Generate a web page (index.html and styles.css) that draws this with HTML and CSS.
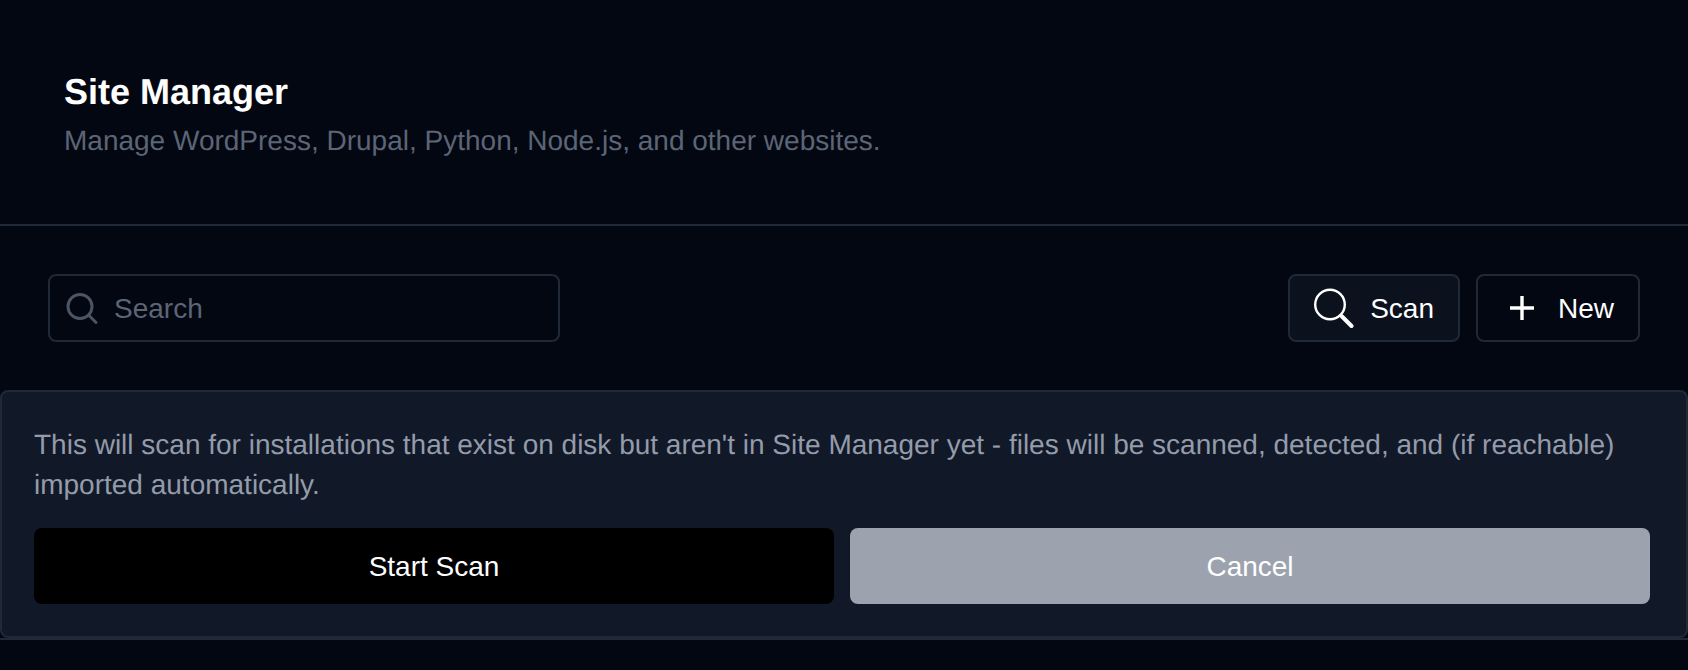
FILE: index.html
```html
<!DOCTYPE html>
<html lang="en">
<head>
    <meta charset="UTF-8">
    <title>Site Manager</title>
    <link rel="stylesheet" href="styles.css">
</head>
<body>
    <header class="page-header">
        <h1>Site Manager</h1>
        <p>Manage WordPress, Drupal, Python, Node.js, and other websites.</p>
    </header>

    <div class="toolbar">
        <label class="search">
            <svg class="search-icon" viewBox="0 0 36 36" fill="none" stroke="currentColor" stroke-width="3" stroke-linecap="round">
                <circle cx="16" cy="16.5" r="12"/>
                <path d="M25 25.5L32 32.5"/>
            </svg>
            <input type="text" placeholder="Search">
        </label>
        <div class="actions">
            <button class="tool-btn tool-btn-scan">
                <svg class="tool-icon" viewBox="0 0 40 40" fill="none" stroke="currentColor" stroke-linecap="round">
                    <circle cx="16" cy="16.5" r="14.8" stroke-width="2.4"/>
                    <path d="M27.5 28L37.5 38" stroke-width="4"/>
                </svg>
                <span>Scan</span>
            </button>
            <button class="tool-btn">
                <svg class="tool-icon" viewBox="0 0 40 40" fill="none" stroke="currentColor" stroke-width="3.4">
                    <path d="M20 8V32M8 20H32"/>
                </svg>
                <span>New</span>
            </button>
        </div>
    </div>

    <section class="scan-wrap">
        <div class="scan-panel">
            <p>This will scan for installations that exist on disk but aren't in Site Manager yet - files will be scanned, detected, and (if reachable) imported automatically.</p>
            <div class="scan-buttons">
                <button class="scan-btn scan-btn-start">Start Scan</button>
                <button class="scan-btn scan-btn-cancel">Cancel</button>
            </div>
        </div>
    </section>
</body>
</html>
```

FILE: styles.css
```css
* {
    box-sizing: border-box;
}

body {
    margin: 0;
    background-color: #030712;
    color: white;
    font-family: "Liberation Sans", Arial, sans-serif;
    font-size: 28px;
    line-height: 40px;
    text-rendering: geometricPrecision;
}

.page-header {
    padding: 64px 64px 63px;
    border-bottom: 2px solid #1f2937;
}

.page-header h1 {
    margin: 0;
    font-size: 36px;
    line-height: 56px;
    font-weight: bold;
}

.page-header p {
    margin: 0;
    padding-top: 1px;
    color: #5c6575;
}

.toolbar {
    display: flex;
    justify-content: space-between;
    padding: 48px;
}

.search {
    display: flex;
    align-items: center;
    gap: 14px;
    width: 512px;
    height: 68px;
    padding: 0 14px;
    border: 2px solid #1f2937;
    border-radius: 8px;
    color: #4b5563;
}

.search-icon {
    width: 36px;
    height: 36px;
    flex: none;
}

.search input {
    flex: 1;
    min-width: 0;
    padding: 2px 0 0;
    border: none;
    outline: none;
    background: transparent;
    color: white;
    font: inherit;
}

.search input::placeholder {
    color: #5c6575;
    opacity: 1;
}

.actions {
    display: flex;
    gap: 16px;
}

.tool-btn {
    display: flex;
    align-items: center;
    gap: 16px;
    height: 68px;
    padding: 0 24px;
    border: 2px solid #1f2937;
    border-radius: 8px;
    background: transparent;
    color: white;
    font: inherit;
}

.tool-btn span {
    padding-top: 2px;
}

.tool-btn-scan {
    background-color: #0b111d;
}

.tool-icon {
    width: 40px;
    height: 40px;
    flex: none;
}

.scan-wrap {
    border-bottom: 2px solid #1f2937;
}

.scan-panel {
    padding: 32px 36px 32px 32px;
    border: 2px solid #1f2937;
    border-radius: 8px;
    background-color: #111827;
    color: #949baa;
}

.scan-panel p {
    margin: 0 0 23px;
    padding-top: 1px;
}

.scan-buttons {
    display: flex;
    gap: 16px;
}

.scan-btn {
    flex: 1;
    height: 76px;
    padding: 2px 0 0;
    border: none;
    border-radius: 8px;
    color: white;
    font: inherit;
}

.scan-btn-start {
    background-color: black;
}

.scan-btn-cancel {
    background-color: #9ca3af;
}
```
